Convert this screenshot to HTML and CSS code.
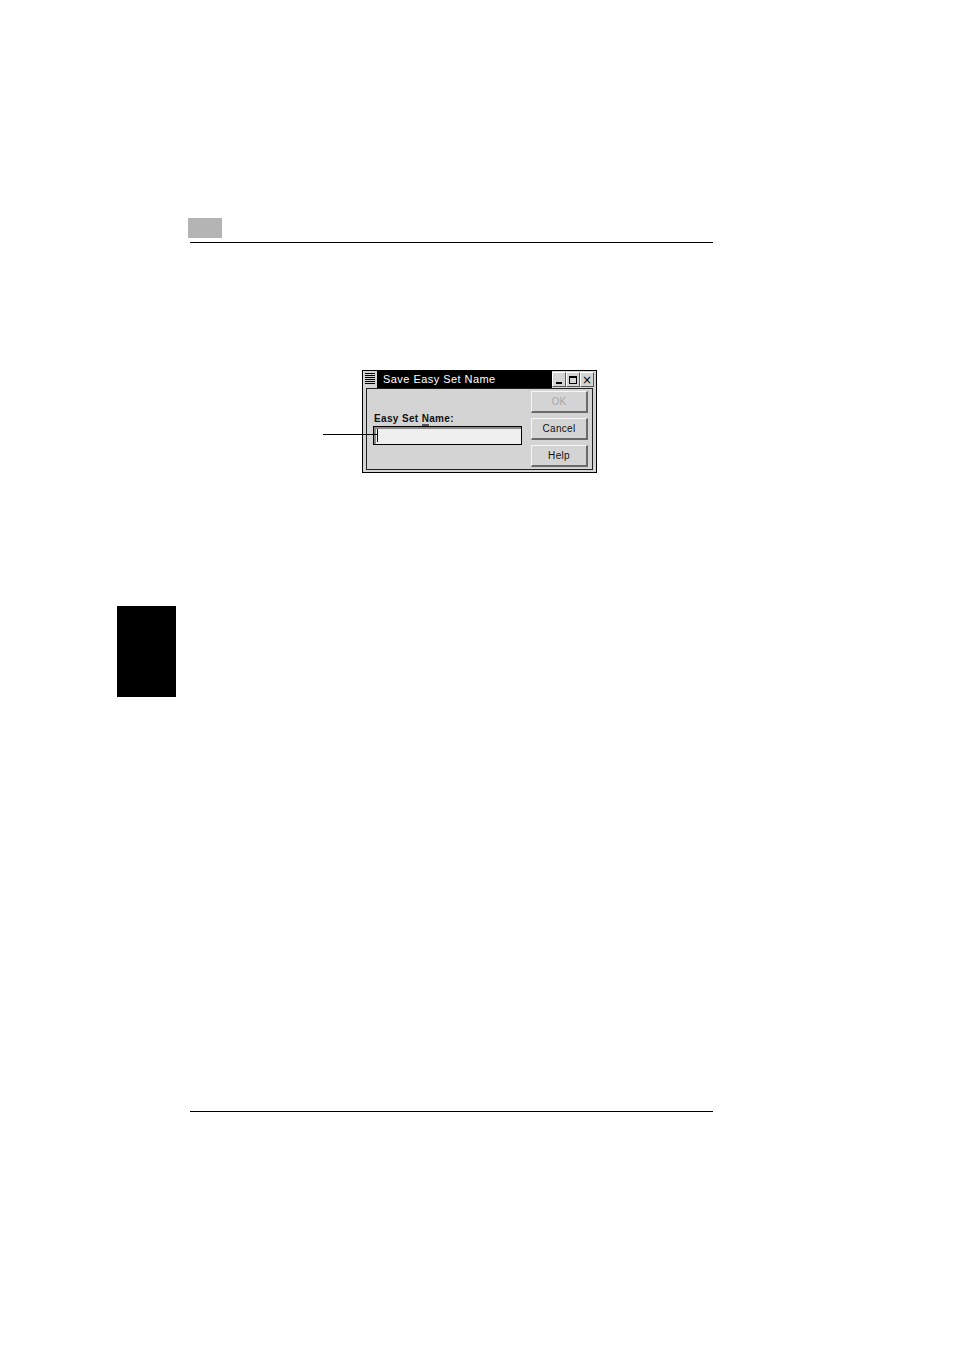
FILE: index.html
```html
<!DOCTYPE html>
<html>
<head>
<meta charset="utf-8">
<link rel="stylesheet" href="styles.css">
</head>
<body>
<div class="page">
  <div class="head-box"></div>
  <div class="rule"></div>

  <div class="figure">
    <div class="pointer"></div>
    <div class="window">
      <div class="titlebar">
        <div class="menu-btn">
          <span></span><span></span><span></span><span></span><span></span><span></span>
        </div>
        <div class="title">Save Easy Set Name</div>
        <div class="tb-btn"><span class="ico-min"></span></div>
        <div class="tb-btn"><span class="ico-max"></span></div>
        <div class="tb-btn"><span class="ico-close">×</span></div>
      </div>
      <div class="panel">
        <div class="left">
          <div class="label">Easy Set <u>N</u>ame:</div>
          <div class="input"><span class="cursor"></span></div>
        </div>
        <div class="buttons">
          <div class="btn disabled">OK</div>
          <div class="btn">Cancel</div>
          <div class="btn">Help</div>
        </div>
      </div>
    </div>
  </div>

  <div class="tab"></div>

  <div class="rule bottom"></div>
</div>
</body>
</html>
```

FILE: styles.css
```css
html, body {
  margin: 0;
  padding: 0;
  background: #fff;
}

.page {
  width: 954px;
  height: 1350px;
  display: flex;
  flex-direction: column;
  align-items: flex-start;
  font-family: "Liberation Sans", Arial, sans-serif;
}

.head-box {
  margin: 218px 0 0 188px;
  width: 34px;
  height: 20px;
  background: #b4b4b4;
}

.rule {
  margin: 4px 0 0 190px;
  width: 523px;
  height: 1px;
  background: #000;
}

.rule.bottom {
  margin-top: 414px;
}

.figure {
  position: relative;
  margin: 127px 0 0 362px;
  width: 235px;
  height: 103px;
}

.pointer {
  position: absolute;
  left: -39px;
  top: 64px;
  width: 55px;
  height: 1px;
  background: #000;
  z-index: 2;
}

.window {
  box-sizing: border-box;
  width: 235px;
  height: 103px;
  border: 1px solid #000;
  background: #d4d4d4;
  padding: 0 2px 2px 0;
  display: flex;
  flex-direction: column;
}

.titlebar {
  height: 17px;
  display: flex;
  align-items: stretch;
}

.menu-btn {
  box-sizing: border-box;
  width: 15px;
  background: #d4d4d4;
  border-right: 1px solid #000;
  padding: 2px 2px 0 2px;
  display: flex;
  flex-direction: column;
  gap: 0;
}

.menu-btn span {
  display: block;
  height: 1px;
  background: #000;
  border-bottom: 1px solid #d4d4d4;
}

.title {
  flex: 1;
  background: #000;
  color: #fff;
  font-size: 11px;
  line-height: 17px;
  padding-left: 5px;
  white-space: nowrap;
  letter-spacing: 0.45px;
}

.tb-btn {
  box-sizing: border-box;
  width: 14px;
  margin: 1px 0 1px 0;
  background: #d4d4d4;
  border-style: solid;
  border-width: 1px;
  border-color: #fff #555 #555 #fff;
  display: flex;
  align-items: center;
  justify-content: center;
  position: relative;
}

.tb-btn:first-of-type {
  margin-left: 1px;
}

.ico-min {
  position: absolute;
  left: 3px;
  bottom: 2px;
  width: 6px;
  height: 2px;
  background: #000;
}

.ico-max {
  box-sizing: border-box;
  width: 8px;
  height: 8px;
  border: 1px solid #000;
  border-top-width: 2px;
}

.ico-close {
  font-size: 12px;
  line-height: 12px;
  color: #000;
  font-family: "DejaVu Sans", sans-serif;
}

.panel {
  flex: 1;
  margin: 0 1px 0 3px;
  border: 1px solid #222;
  display: flex;
  justify-content: space-between;
  padding: 2px 4px 0 6px;
}

.left {
  padding-top: 22px;
}

.label {
  font-size: 10px;
  font-weight: bold;
  line-height: 12px;
  color: #111;
  letter-spacing: 0.35px;
  margin-left: 1px;
}

.label u {
  text-decoration: none;
  border-bottom: 2px solid #555;
}

.input {
  box-sizing: border-box;
  width: 149px;
  height: 19px;
  margin-top: 1px;
  background: #efefef;
  border: 1px solid #000;
  box-shadow: inset 2px 2px 0 #8a8a8a;
  position: relative;
}

.cursor {
  position: absolute;
  left: 3px;
  top: 2px;
  width: 1px;
  height: 13px;
  background: #000;
}

.buttons {
  display: flex;
  flex-direction: column;
  gap: 5px;
}

.btn {
  box-sizing: border-box;
  width: 57px;
  height: 22px;
  background: #d4d4d4;
  border-style: solid;
  border-width: 1px 2px 2px 1px;
  border-color: #f6f6f6 #6a6a6a #6a6a6a #f6f6f6;
  font-size: 10px;
  line-height: 19px;
  text-align: center;
  color: #111;
  letter-spacing: 0.3px;
}

.btn.disabled {
  color: #a8a8a8;
}

.tab {
  margin: 133px 0 0 117px;
  width: 59px;
  height: 91px;
  background: #000;
}
```
